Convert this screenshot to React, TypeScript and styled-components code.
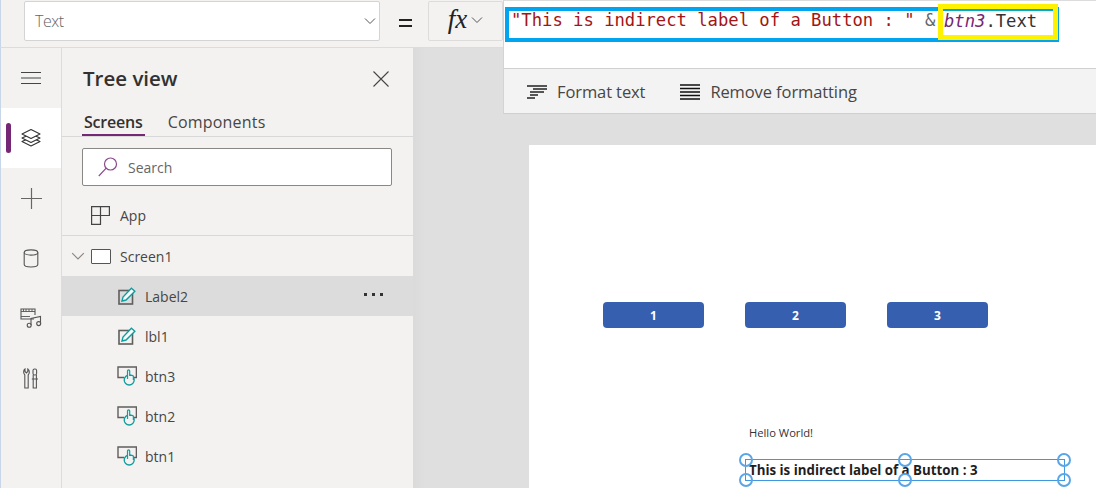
import styled, { createGlobalStyle } from 'styled-components';

const ui = '"Open Sans", "Noto Sans", sans-serif';

const GlobalStyle = createGlobalStyle`
  html, body {
    margin: 0;
    padding: 0;
    background: #fff;
  }
  * {
    box-sizing: border-box;
  }
`;

const ChevronDown = ({ size = 12, color = '#555' }: { size?: number; color?: string }) => (
  <svg width={size} height={size} viewBox="0 0 12 12" fill="none" stroke={color} strokeWidth="1">
    <path d="M1 3.5 L6 8.5 L11 3.5" />
  </svg>
);

const LabelIcon = () => (
  <svg width="18" height="18" viewBox="0 0 18 18" fill="none">
    <rect x="1" y="3.5" width="13.5" height="13.5" stroke="#605e5c" strokeWidth="1.6" />
    <path d="M4 14 L5 10 L13.4 1.2 L16.8 4.2 L8 13 Z" fill="#fff" stroke="#0f9d9d" strokeWidth="1.4" />
  </svg>
);

const ButtonIcon = () => (
  <svg width="20" height="20" viewBox="0 0 20 20" fill="none">
    <path d="M7 11.5 H1 V1 H19.4 V11.5 H16" stroke="#605e5c" strokeWidth="1.4" />
    <circle cx="12.2" cy="14" r="5" fill="#f3f2f1" stroke="#0f9d9d" strokeWidth="1.3" />
    <path d="M10.5 13 V5 Q10.5 3.8 11.6 3.8 Q12.7 3.8 12.7 5 V9.4 H15 Q16.4 9.4 16.4 10.8 V14" fill="#f3f2f1" stroke="#0f9d9d" strokeWidth="1.2" />
  </svg>
);

function App() {
  return (
    <>
      <GlobalStyle />
      <Page>
        <TopBar>
          <PropertySelect>
            <span>Text</span>
            <ChevronDown />
          </PropertySelect>
          <EqualsSign />
          <FxButton>
            <FxText>fx</FxText>
            <ChevronDown />
          </FxButton>
        </TopBar>
        <Body>
          <Rail>
            <RailItem>
              <svg width="22" height="14" viewBox="0 0 22 14" stroke="#444" strokeWidth="1">
                <path d="M1 1.5 H21 M1 7 H21 M1 12.5 H21" />
              </svg>
            </RailItem>
            <RailItem active>
              <ActiveMark />
              <svg width="20" height="20" viewBox="0 0 20 20" fill="#fff" stroke="#333" strokeWidth="1.1" strokeLinejoin="round">
                <path d="M10 9.5 L19 13.5 L10 18 L1 13.5 Z" />
                <path d="M10 6 L19 10 L10 14.5 L1 10 Z" />
                <path d="M10 1.5 L19 6 L10 10.5 L1 6 Z" />
              </svg>
            </RailItem>
            <RailItem>
              <svg width="21" height="21" viewBox="0 0 21 21" stroke="#666" strokeWidth="1.2">
                <path d="M10.5 0 V21 M0 10.5 H21" />
              </svg>
            </RailItem>
            <RailItem>
              <svg width="16" height="19" viewBox="0 0 16 19" fill="none" stroke="#555" strokeWidth="1.1">
                <ellipse cx="8" cy="3.5" rx="6.8" ry="2.6" />
                <path d="M1.2 3.5 V15.5 Q1.2 18 8 18 Q14.8 18 14.8 15.5 V3.5" />
              </svg>
            </RailItem>
            <RailItem>
              <svg width="22" height="20" viewBox="0 0 22 20" fill="none" stroke="#555" strokeWidth="1.1">
                <path d="M14 11 H1 V1 H15 V7" />
                <path d="M1 3.5 H15 M1 8.5 H10 M3.5 1 V3.5 M6 1 V3.5 M9 1 V3.5 M12 1 V3.5" strokeWidth="0.9" />
                <path d="M11 17 V10.5 L20.5 8.5 V15.5" />
                <circle cx="9.2" cy="17.2" r="2" />
                <circle cx="18.7" cy="15.6" r="2" />
              </svg>
            </RailItem>
            <RailItem>
              <svg width="16" height="21" viewBox="0 0 16 21" fill="none" stroke="#555" strokeWidth="1.1">
                <path d="M2 1 V3.5 L3.4 5 L4.8 3.5 V1 Q7 2.5 6 5.5 L5.2 7 V20 H1.8 V7 L1 5.5 Q0 2.5 2 1 Z" />
                <rect x="10" y="1" width="3.6" height="6" rx="1.5" />
                <path d="M10.2 7 V11 H13.4 V7 M8.8 11 H15 M10.2 11 V20 H13.4 V11" />
              </svg>
            </RailItem>
          </Rail>
          <Panel>
            <PanelHeader>
              <PanelTitle>Tree view</PanelTitle>
              <svg width="16" height="16" viewBox="0 0 16 16" stroke="#444" strokeWidth="1.1">
                <path d="M0.5 0.5 L15.5 15.5 M15.5 0.5 L0.5 15.5" />
              </svg>
            </PanelHeader>
            <Tabs>
              <Tab selected>Screens</Tab>
              <Tab>Components</Tab>
            </Tabs>
            <SearchBox>
              <svg width="20" height="20" viewBox="0 0 20 20" fill="none" stroke="#8b4a8b" strokeWidth="1.2">
                <circle cx="12.5" cy="7" r="6" />
                <path d="M8.2 11.2 L0.8 19" />
              </svg>
              <span>Search</span>
            </SearchBox>
            <AppRow>
              <svg width="19" height="19" viewBox="0 0 19 19" fill="none" stroke="#444" strokeWidth="1.2">
                <path d="M0.6 0.6 H18.4 V9.5 H9.5 V18.4 H0.6 Z M9.5 0.6 V9.5 M0.6 9.5 H9.5" />
              </svg>
              <RowLabel>App</RowLabel>
            </AppRow>
            <TreeRow>
              <ChevronSlot>
                <ChevronDown size={14} color="#8a8886" />
              </ChevronSlot>
              <ScreenIcon />
              <RowLabel>Screen1</RowLabel>
            </TreeRow>
            <TreeRow child selected>
              <IconSlot>
                <LabelIcon />
              </IconSlot>
              <RowLabel>Label2</RowLabel>
              <MoreDots>
                <i />
                <i />
                <i />
              </MoreDots>
            </TreeRow>
            <TreeRow child>
              <IconSlot>
                <LabelIcon />
              </IconSlot>
              <RowLabel>lbl1</RowLabel>
            </TreeRow>
            {['btn3', 'btn2', 'btn1'].map((name) => (
              <TreeRow child key={name}>
                <IconSlot>
                  <ButtonIcon />
                </IconSlot>
                <RowLabel>{name}</RowLabel>
              </TreeRow>
            ))}
          </Panel>
          <Stage>
            <Canvas>
              <CanvasButton x={74}>1</CanvasButton>
              <CanvasButton x={216}>2</CanvasButton>
              <CanvasButton x={358}>3</CanvasButton>
              <HelloLabel>Hello World!</HelloLabel>
              <SelectedLabel>
                This is indirect label of a Button : 3
                <Handle h={0} v={0} />
                <Handle h={50} v={0} />
                <Handle h={100} v={0} />
                <Handle h={0} v={100} />
                <Handle h={50} v={100} />
                <Handle h={100} v={100} />
              </SelectedLabel>
            </Canvas>
          </Stage>
        </Body>
        <FormulaPopup>
          <FormulaArea>
            <BlueBox>
              <Str>"This is indirect label of a Button : "</Str> <Amp>&amp;</Amp>{' '}
              <YellowBox>
                <Ref>btn3</Ref>.Text
              </YellowBox>
            </BlueBox>
          </FormulaArea>
          <FormatBar>
            <FormatAction>
              <svg width="20" height="14" viewBox="0 0 20 14" stroke="#222" strokeWidth="1.3">
                <path d="M0 1 H20 M6 4 H20 M3 7 H17 M3 10 H11 M0 13 H8" />
              </svg>
              Format text
            </FormatAction>
            <FormatAction>
              <svg width="20" height="16" viewBox="0 0 20 16" stroke="#111" strokeWidth="1.5">
                <path d="M0 1 H20 M0 4.5 H20 M0 8 H20 M0 11.5 H20 M0 15 H20" />
              </svg>
              Remove formatting
            </FormatAction>
          </FormatBar>
        </FormulaPopup>
      </Page>
    </>
  );
}

const Page = styled.div`
  position: relative;
  width: 1096px;
  height: 495px;
  overflow: hidden;
  background: #fff;
  font-family: ${ui};
`;

const TopBar = styled.div`
  display: flex;
  align-items: flex-start;
  height: 48px;
  padding: 1px 0 0 24px;
  background: #f3f2f1;
  border-left: 1px solid #c8d6ea;
  border-bottom: 1px solid #dcdcdc;
`;

const PropertySelect = styled.div`
  display: flex;
  align-items: center;
  justify-content: space-between;
  width: 356px;
  height: 40px;
  margin-left: -1px;
  padding: 0 3px 0 10px;
  background: #fff;
  border: 1px solid #d4d4d4;
  border-radius: 2px;
  font-size: 16px;
  font-weight: 300;
  color: #666;
  letter-spacing: -0.5px;
`;

const EqualsSign = styled.div`
  width: 13px;
  height: 8px;
  margin: 18px 16px 0 19px;
  border-top: 2px solid #222;
  border-bottom: 2px solid #222;
`;

const FxButton = styled.div`
  display: flex;
  align-items: center;
  justify-content: center;
  gap: 4px;
  width: 75px;
  height: 40px;
  padding-bottom: 3px;
  border: 1px solid #dcdcdc;
  border-radius: 2px;
`;

const FxText = styled.span`
  font-family: "Liberation Serif", serif;
  font-style: italic;
  font-size: 27px;
  color: #222;
`;

const Body = styled.div`
  display: flex;
  height: 440px;
  border-left: 1px solid #c8d6ea;
`;

const Rail = styled.div`
  display: flex;
  flex-direction: column;
  flex: 0 0 61px;
  background: #f3f2f1;
  border-right: 1px solid #dcdcdc;
`;

const RailItem = styled.div<{ active?: boolean }>`
  position: relative;
  display: flex;
  align-items: center;
  justify-content: center;
  height: 60px;
  background: ${(props) => (props.active ? '#fff' : 'transparent')};
`;

const ActiveMark = styled.div`
  position: absolute;
  left: 5px;
  top: 15px;
  width: 5px;
  height: 30px;
  border-radius: 3px;
  background: #742774;
`;

const Panel = styled.div`
  flex: 0 0 351px;
  background: #f3f2f1;
  color: #333;
`;

const PanelHeader = styled.div`
  display: flex;
  align-items: center;
  justify-content: space-between;
  height: 61px;
  padding: 0 24px 0 21px;
`;

const PanelTitle = styled.div`
  padding-bottom: 2px;
  font-size: 20.5px;
  font-weight: 600;
  color: #323130;
`;

const Tabs = styled.div`
  display: flex;
  gap: 21px;
  height: 28px;
  padding-left: 20px;
  border-bottom: 1px solid #d8d8d8;
`;

const Tab = styled.div<{ selected?: boolean }>`
  height: 27px;
  padding: 0 2px;
  font-size: 16px;
  line-height: 26px;
  letter-spacing: ${(props) => (props.selected ? '-0.2px' : '0.2px')};
  font-weight: ${(props) => (props.selected ? 600 : 400)};
  color: ${(props) => (props.selected ? '#323130' : '#484644')};
  border-bottom: ${(props) => (props.selected ? '2px solid #742774' : 'none')};
`;

const SearchBox = styled.div`
  display: flex;
  align-items: center;
  gap: 10px;
  width: 310px;
  height: 38px;
  margin: 11px 0 0 20px;
  padding-left: 15px;
  background: #fff;
  border: 1px solid #8a8886;
  border-radius: 2px;
  font-size: 14px;
  color: #666;
`;

const AppRow = styled.div`
  display: flex;
  align-items: center;
  height: 50px;
  padding: 10px 0 0 29px;
  border-bottom: 1px solid #d8d8d8;
  gap: 10px;
`;

const TreeRow = styled.div<{ child?: boolean; selected?: boolean }>`
  position: relative;
  display: flex;
  align-items: center;
  height: 40px;
  padding-left: ${(props) => (props.child ? '55px' : '9px')};
  background: ${(props) => (props.selected ? '#dcdcdc' : 'transparent')};
`;

const RowLabel = styled.span`
  font-size: 14px;
  color: #484644;
`;

const ChevronSlot = styled.div`
  display: flex;
  width: 20px;
`;

const IconSlot = styled.div`
  display: flex;
  justify-content: center;
  width: 20px;
  margin-right: 8px;
`;

const ScreenIcon = styled.div`
  width: 20px;
  height: 15px;
  margin-right: 9px;
  background: #fff;
  border: 1px solid #555;
  border-radius: 1px;
`;

const MoreDots = styled.div`
  position: absolute;
  right: 30px;
  top: 17px;
  display: flex;
  gap: 5px;

  i {
    width: 3px;
    height: 3px;
    background: #333;
  }
`;

const Stage = styled.div`
  flex: 1;
  padding: 97px 0 0 116px;
  background: linear-gradient(to right, #dadada 0, #dfdfdf 12px);
`;

const Canvas = styled.div`
  position: relative;
  height: 343px;
  background: #fff;
`;

const CanvasButton = styled.div<{ x: number }>`
  position: absolute;
  left: ${(props) => props.x}px;
  top: 157px;
  width: 101px;
  height: 26px;
  display: flex;
  align-items: center;
  justify-content: center;
  background: #365fb0;
  border-radius: 4px;
  color: #fff;
  font-size: 12px;
  font-weight: 700;
`;

const HelloLabel = styled.div`
  position: absolute;
  left: 220px;
  top: 280px;
  font-size: 11.2px;
  font-weight: 400;
  line-height: 16px;
  color: #333;
`;

const SelectedLabel = styled.div`
  position: absolute;
  left: 216px;
  top: 314px;
  width: 320px;
  height: 22px;
  padding-left: 3px;
  border: 1.5px solid #3f97df;
  font-size: 13.3px;
  line-height: 20px;
  font-weight: 700;
  color: #1e1e1e;
  white-space: nowrap;
`;

const Handle = styled.span<{ h: number; v: number }>`
  position: absolute;
  left: ${(props) => props.h}%;
  top: ${(props) => props.v}%;
  width: 14px;
  height: 14px;
  transform: translate(-50%, -50%);
  border: 2px solid #5aa5e6;
  border-radius: 50%;
`;

const FormulaPopup = styled.div`
  position: absolute;
  left: 503px;
  top: 0;
  width: 593px;
  height: 114px;
  border-top: 1px solid #dcdcdc;
  border-left: 1px solid #d4d4d4;
  border-bottom: 1px solid #d0d0d0;
  background: #fff;
`;

const FormulaArea = styled.div`
  height: 68px;
  padding: 6px 0 0 1px;
  border-bottom: 1px solid #d0d0d0;
`;

const BlueBox = styled.div`
  position: relative;
  width: 554px;
  height: 35px;
  padding-left: 2px;
  border: 4px solid #00a4ef;
  font-family: "DejaVu Sans Mono", monospace;
  font-size: 17.2px;
  line-height: 19px;
  white-space: pre;
`;

const Str = styled.span`
  color: #a31515;
`;

const Amp = styled.span`
  color: #666;
`;

const YellowBox = styled.span`
  position: absolute;
  left: 429px;
  top: -7px;
  width: 120px;
  height: 36px;
  padding: 3px 0 0 1px;
  border: 5px solid #fff200;
  color: #333;
  line-height: 19px;
`;

const Ref = styled.span`
  color: #742774;
  font-style: italic;
`;

const FormatBar = styled.div`
  display: flex;
  align-items: center;
  gap: 35px;
  height: 44px;
  padding: 1px 0 0 23px;
  background: #f3f3f3;
`;

const FormatAction = styled.div`
  display: flex;
  align-items: center;
  gap: 10px;
  font-size: 16.5px;
  letter-spacing: -0.1px;
  color: #484644;
`;

export default App;
